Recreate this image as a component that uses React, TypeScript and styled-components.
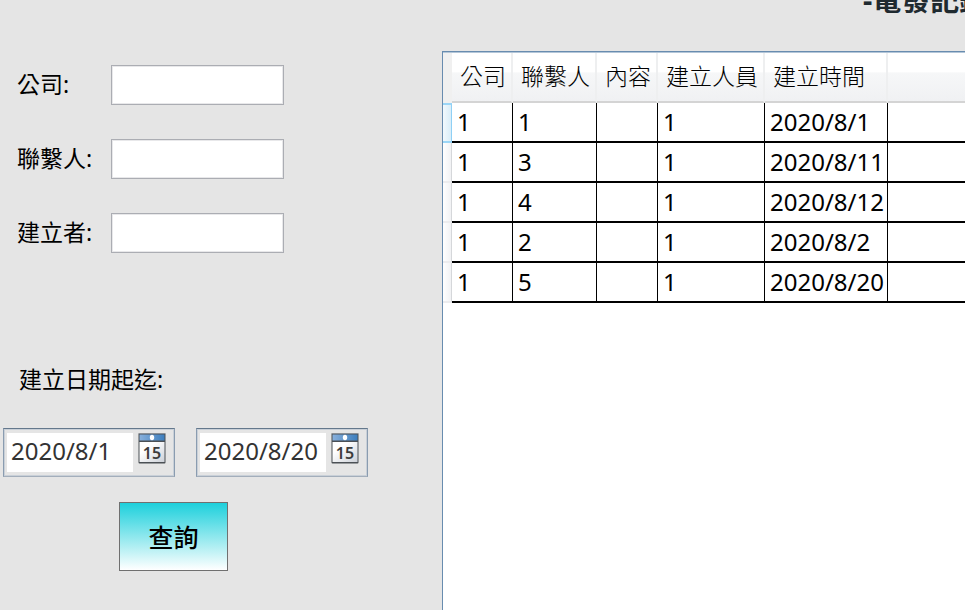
import React, { useState } from "react";
import styled, { createGlobalStyle } from "styled-components";

const GlobalStyle = createGlobalStyle`
  *, *::before, *::after { box-sizing: border-box; }
  body {
    margin: 0;
    background: #e5e5e5;
    color: #000;
    font-family: "Noto Sans", "Noto Sans CJK TC", sans-serif;
    overflow: hidden;
  }
  input, button { font: inherit; color: inherit; }
`;

const Page = styled.div`
  display: flex;
  flex-direction: column;
  height: 100vh;
  overflow: hidden;
`;

const TitleBar = styled.header`
  flex: none;
  height: 51px;
  padding-left: calc(100% - 102px);
  overflow: hidden;
`;

const Title = styled.h1`
  margin: -18px 0 0;
  font-size: 29px;
  line-height: 36px;
  font-weight: 700;
  color: #1f2a30;
  white-space: nowrap;
`;

const Body = styled.main`
  flex: 1;
  min-height: 0;
  display: grid;
  grid-template-columns: 442px minmax(0, 1fr);
`;

const SearchForm = styled.form`
  display: flex;
  flex-direction: column;
  padding-top: 14px;
`;

const Fields = styled.div`
  display: flex;
  flex-direction: column;
  gap: 34px;
  padding-left: 17px;
`;

const Field = styled.div`
  display: grid;
  grid-template-columns: 94px 173px;
  align-items: center;
`;

const Label = styled.label`
  padding-bottom: 2px;
  font-size: 23px;
  line-height: 32px;
  white-space: nowrap;
`;

const TextBox = styled.input`
  height: 40px;
  width: 100%;
  padding: 0 6px;
  border: 1px solid #abadb3;
  box-shadow: inset 0 0 0 1px #e8e8ea;
  background: #fff;
  font-size: 23px;
  outline: none;
`;

const DateGroup = styled.fieldset`
  margin: 110px 0 0;
  padding: 0 0 0 3px;
  border: 0;
  min-width: 0;
`;

const DateLegend = styled.legend`
  padding: 0 0 0 16px;
  font-size: 23px;
  line-height: 32px;
`;

const DateRow = styled.div`
  display: flex;
  gap: 21px;
  margin-top: 33px;
`;

const DatePicker = styled.div`
  display: flex;
  align-items: flex-start;
  width: 172px;
  height: 49px;
  padding: 4px 8px 4px 3px;
  gap: 5px;
  border: 1px solid;
  border-color: #64788c #8a9cb0 #a3aebb #8a9cb0;
  box-shadow: inset 0 0 0 1px #c9d0d8;
`;

const DateInput = styled.input`
  flex: 1;
  min-width: 0;
  height: 39px;
  padding: 0 0 4px 4px;
  border: 0;
  background: #fff;
  color: #333;
  font-size: 24px;
  outline: none;
`;

const CalendarButton = styled.button`
  flex: none;
  width: 28px;
  height: 31px;
  padding: 0;
  border: 0;
  background: none;
  svg { display: block; }
`;

const QueryButton = styled.button`
  width: 109px;
  height: 69px;
  margin: 25px 0 0 119px;
  padding: 0;
  border: 1px solid #707070;
  background: linear-gradient(#1dd0dc, #fff);
  font-size: 25px;
  line-height: 36px;
  font-weight: 500;
`;

const GridPanel = styled.section`
  background: #fff;
  border-top: 1px solid #688caf;
  border-left: 1px solid #688caf;
  box-shadow: inset 0 1px 0 #b4c6d8;
  padding-top: 1px;
  overflow: hidden;
`;

const Table = styled.table`
  width: 100%;
  table-layout: fixed;
  border-collapse: separate;
  border-spacing: 0;
`;

const HeadCell = styled.th`
  height: 50px;
  padding: 0 0 2px 8px;
  border-right: 2px solid #eeeff0;
  border-bottom: 2px solid #d4d4d4;
  background: linear-gradient(#fff 0 40%, #f6f7f8 41%, #f0f1f3);
  font-size: 23px;
  line-height: 32px;
  font-weight: 300;
  text-align: left;
  white-space: nowrap;
  &:last-child { border-right: 0; }
`;

const CornerCell = styled.td`
  padding: 0;
  background: #f0f0f0;
`;

const Cell = styled.td`
  height: 40px;
  padding: 0 0 0 5px;
  border-right: 1px solid #000;
  border-bottom: 2px solid #000;
  font-size: 24px;
  line-height: 32px;
  white-space: nowrap;
  &:last-child { border-right: 0; }
`;

const RowHeader = styled.td<{ $active: boolean }>`
  padding: 0;
  border-right: 1px solid ${(p) => (p.$active ? "#8fd0f5" : "#d5d7da")};
  border-bottom: 2px solid ${(p) => (p.$active ? "#9bd6f7" : "#ececee")};
  border-top: ${(p) => (p.$active ? "2px solid #9bd6f7" : "0")};
  background: ${(p) =>
    p.$active
      ? "linear-gradient(90deg, #f2f9fd, #d9edf8)"
      : "linear-gradient(90deg, #fff, #f1f2f4)"};
`;

const CalendarIcon = ({ id }: { id: string }) => (
  <svg width="28" height="31" viewBox="0 0 28 31" aria-hidden="true">
    <defs>
      <linearGradient id={`${id}-band`} x1="0" x2="1" y1="0" y2="0">
        <stop offset="0" stopColor="#88b0dc" />
        <stop offset="1" stopColor="#3d7ebd" />
      </linearGradient>
      <linearGradient id={`${id}-page`} x1="0" x2="1" y1="0" y2="1">
        <stop offset="0.3" stopColor="#fff" />
        <stop offset="1" stopColor="#cdd1d8" />
      </linearGradient>
    </defs>
    <rect x="0.5" y="0.5" width="27" height="30" rx="1" fill="#4b5055" />
    <path d="M0.5 .5H27.5" stroke="#8b8f94" />
    <rect x="1.5" y="1.5" width="25" height="6" fill={`url(#${id}-band)`} />
    <rect x="1.5" y="9" width="25" height="20" fill={`url(#${id}-page)`} />
    <ellipse cx="14" cy="4.5" rx="2.2" ry="2.7" fill="#fff" />
    <text
      x="14"
      y="26"
      textAnchor="middle"
      fontFamily="'Noto Sans', sans-serif"
      fontSize="16"
      fontWeight="600"
      fill="#3c3c3c"
    >
      15
    </text>
  </svg>
);

const fields = [
  { id: "company", label: "公司:" },
  { id: "contact", label: "聯繫人:" },
  { id: "creator", label: "建立者:" },
];

const columns = ["公司", "聯繫人", "內容", "建立人員", "建立時間"];

const records = [
  ["1", "1", "", "1", "2020/8/1"],
  ["1", "3", "", "1", "2020/8/11"],
  ["1", "4", "", "1", "2020/8/12"],
  ["1", "2", "", "1", "2020/8/2"],
  ["1", "5", "", "1", "2020/8/20"],
];

export default function App() {
  const [from, setFrom] = useState("2020/8/1");
  const [to, setTo] = useState("2020/8/20");

  return (
    <>
      <GlobalStyle />
      <Page>
        <TitleBar>
          <Title>-電發記錄</Title>
        </TitleBar>
        <Body>
          <SearchForm onSubmit={(e) => e.preventDefault()}>
            <Fields>
              {fields.map((f) => (
                <Field key={f.id}>
                  <Label htmlFor={f.id}>{f.label}</Label>
                  <TextBox id={f.id} type="text" />
                </Field>
              ))}
            </Fields>
            <DateGroup>
              <DateLegend>建立日期起迄:</DateLegend>
              <DateRow>
                <DatePicker>
                  <DateInput
                    aria-label="起始日期"
                    value={from}
                    onChange={(e) => setFrom(e.target.value)}
                  />
                  <CalendarButton type="button" aria-label="選擇起始日期">
                    <CalendarIcon id="from" />
                  </CalendarButton>
                </DatePicker>
                <DatePicker>
                  <DateInput
                    aria-label="結束日期"
                    value={to}
                    onChange={(e) => setTo(e.target.value)}
                  />
                  <CalendarButton type="button" aria-label="選擇結束日期">
                    <CalendarIcon id="to" />
                  </CalendarButton>
                </DatePicker>
              </DateRow>
            </DateGroup>
            <QueryButton type="submit">查詢</QueryButton>
          </SearchForm>
          <GridPanel>
            <Table>
              <colgroup>
                <col width="9" />
                <col width="61" />
                <col width="84" />
                <col width="61" />
                <col width="107" />
                <col width="123" />
                <col />
              </colgroup>
              <thead>
                <tr>
                  <CornerCell />
                  {columns.map((c) => (
                    <HeadCell key={c} scope="col">
                      {c}
                    </HeadCell>
                  ))}
                  <HeadCell as="td" />
                </tr>
              </thead>
              <tbody>
                {records.map((row, r) => (
                  <tr key={r}>
                    <RowHeader $active={r === 0} />
                    {row.map((value, c) => (
                      <Cell key={c}>{value}</Cell>
                    ))}
                    <Cell />
                  </tr>
                ))}
              </tbody>
            </Table>
          </GridPanel>
        </Body>
      </Page>
    </>
  );
}
